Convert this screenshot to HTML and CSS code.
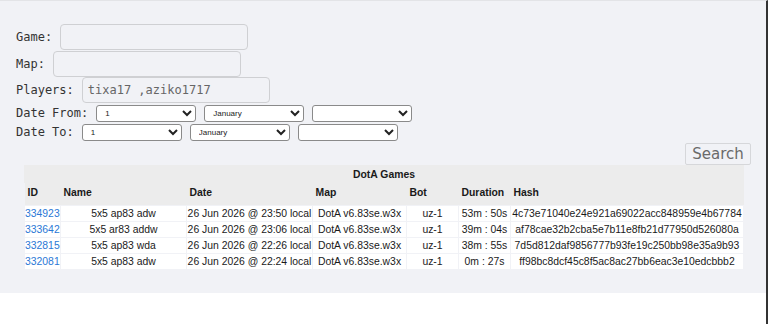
FILE: index.html
```html
<!DOCTYPE html>
<html lang="en">
<head>
  <meta charset="UTF-8" />
  <meta name="viewport" content="width=device-width, initial-scale=1.0"/>
  <title>DotA Games</title>
  <link rel="stylesheet" href="styles.css">
</head>
<body>

  <div class="page">
    <form class="search-form" onsubmit="return false;">
      <div class="row">
        <label for="game">Game:</label>
        <input type="text" id="game" class="field" />
      </div>
      <div class="row">
        <label for="map">Map:</label>
        <input type="text" id="map" class="field" />
      </div>
      <div class="row">
        <label for="players">Players:</label>
        <input type="text" id="players" class="field" value="tixa17 ,aziko1717" />
      </div>
      <div class="row row-date">
        <label>Date From:</label>
        <select class="pick"><option>1</option></select>
        <select class="pick"><option>January</option></select>
        <select class="pick"><option></option></select>
      </div>
      <div class="row row-date">
        <label>Date To:</label>
        <select class="pick"><option>1</option></select>
        <select class="pick"><option>January</option></select>
        <select class="pick"><option></option></select>
      </div>
      <div class="actions">
        <button type="submit" class="search-btn">Search</button>
      </div>
    </form>

    <table class="games">
      <caption>DotA Games</caption>
      <colgroup>
        <col style="width:36px"><col style="width:126px"><col style="width:126px">
        <col style="width:94px"><col style="width:52px"><col style="width:52px"><col style="width:233px">
      </colgroup>
      <thead>
        <tr>
          <th>ID</th><th>Name</th><th>Date</th><th>Map</th><th>Bot</th><th>Duration</th><th>Hash</th>
        </tr>
      </thead>
      <tbody>
        <tr>
          <td class="id"><a href="#">334923</a></td><td>5x5 ap83 adw</td><td>26 Jun 2026 @ 23:50 local</td>
          <td>DotA v6.83se.w3x</td><td>uz-1</td><td>53m : 50s</td><td>4c73e71040e24e921a69022acc848959e4b67784</td>
        </tr>
        <tr>
          <td class="id"><a href="#">333642</a></td><td>5x5 ar83 addw</td><td>26 Jun 2026 @ 23:06 local</td>
          <td>DotA v6.83se.w3x</td><td>uz-1</td><td>39m : 04s</td><td>af78cae32b2cba5e7b11e8fb21d77950d526080a</td>
        </tr>
        <tr>
          <td class="id"><a href="#">332815</a></td><td>5x5 ap83 wda</td><td>26 Jun 2026 @ 22:26 local</td>
          <td>DotA v6.83se.w3x</td><td>uz-1</td><td>38m : 55s</td><td>7d5d812daf9856777b93fe19c250bb98e35a9b93</td>
        </tr>
        <tr>
          <td class="id"><a href="#">332081</a></td><td>5x5 ap83 adw</td><td>26 Jun 2026 @ 22:24 local</td>
          <td>DotA v6.83se.w3x</td><td>uz-1</td><td>0m : 27s</td><td>ff98bc8dcf45c8f5ac8ac27bb6eac3e10edcbbb2</td>
        </tr>
      </tbody>
    </table>
  </div>

</body>
</html>
```

FILE: styles.css
```css
body {
  margin: 0;
  background-color: #ffffff;
  font-family: "DejaVu Sans Mono", monospace;
  height: 324px;
  border-right: 2px solid #333;
  border-top: 1px solid #e3e4e7;
  box-sizing: border-box;
}

.page {
  background-color: #f1f2f6;
  padding: 23px 15px 23px 16px;
}

/* Formulario */
.row {
  display: flex;
  align-items: center;
  gap: 8px;
  height: 26.5px;
  font-size: 12px;
  color: #333;
}

.row-date {
  height: 19px;
}

.field {
  width: 188px;
  height: 26px;
  box-sizing: border-box;
  border: 1px solid #cfd0d3;
  border-radius: 4px;
  background: transparent;
  padding: 0 5px;
  font-family: "DejaVu Sans Mono", monospace;
  font-size: 12px;
  color: #666;
}

.pick {
  width: 100px;
  height: 17px;
  box-sizing: border-box;
  border: 1px solid #8a8a8a;
  border-radius: 3px;
  background-color: #fff;
  font-family: "Liberation Sans", Arial, sans-serif;
  font-size: 8px;
  color: #222;
  padding: 0 4px;
}

.actions {
  display: flex;
  justify-content: flex-end;
  margin-top: 1px;
}

.search-btn {
  width: 66px;
  height: 22px;
  border: 1px solid #d6d7da;
  border-radius: 2px;
  background-color: #f1f2f6;
  font-family: "DejaVu Sans", sans-serif;
  font-size: 15px;
  color: #6a6a6a;
  padding: 0;
}

/* Tabela */
.games {
  margin: 0 8px;
  width: 719px;
  table-layout: fixed;
  border-collapse: collapse;
  font-family: "Liberation Sans", Arial, sans-serif;
  font-size: 10.4px;
  color: #1a1a1a;
}

.games caption {
  background-color: #ececec;
  font-weight: bold;
  height: 17px;
  line-height: 17px;
  padding-top: 1px;
}

.games th {
  background-color: #ececec;
  text-align: left;
  font-weight: bold;
  padding: 4px 3px 6px 3px;
  line-height: 12px;
}

.games td {
  background-color: #fff;
  border: 1px solid #f1f2f6;
  text-align: center;
  padding: 1px 0;
  line-height: 13px;
  white-space: nowrap;
}

.games td.id {
  text-align: left;
}

.games a {
  color: #2a78d6;
  text-decoration: none;
}
```
